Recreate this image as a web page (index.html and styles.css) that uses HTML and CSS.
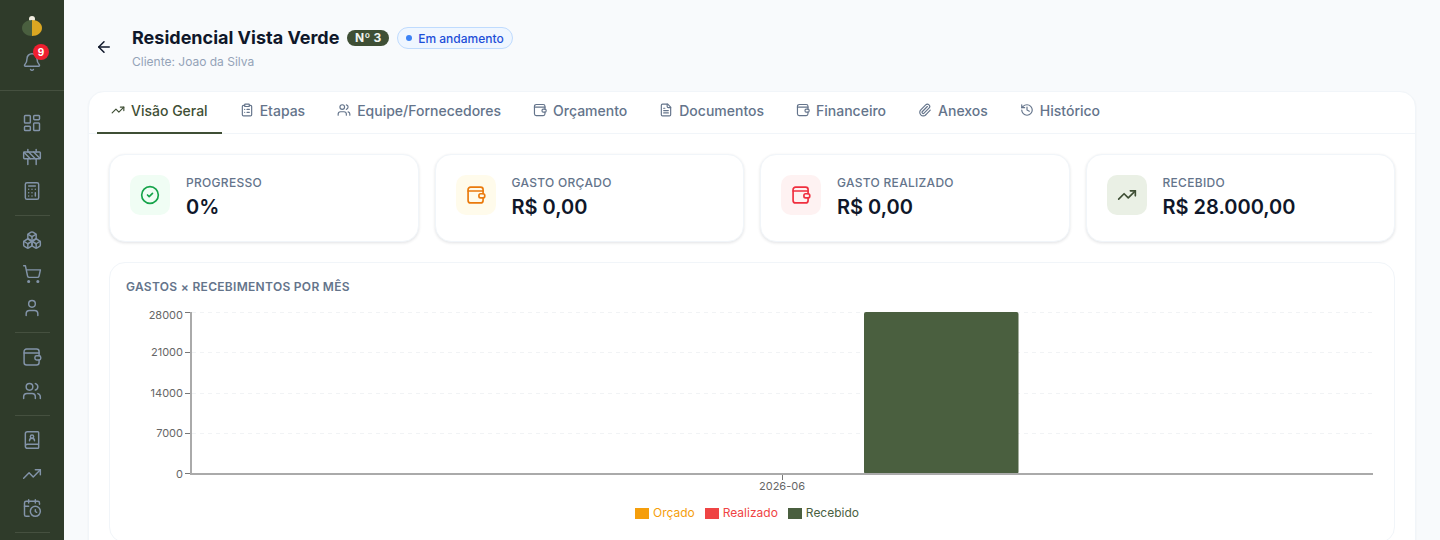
FILE: index.html
```html
<!DOCTYPE html>
<html lang="pt-BR">
<head>
    <meta charset="UTF-8">
    <title>Residencial Vista Verde</title>
    <link rel="stylesheet" href="styles.css">
</head>
<body>
    <svg class="icon-defs" xmlns="http://www.w3.org/2000/svg">
        <symbol id="i-bell" viewBox="0 0 24 24"><path d="M10.268 21a2 2 0 0 0 3.464 0"/><path d="M3.262 15.326A1 1 0 0 0 4 17h16a1 1 0 0 0 .74-1.673C19.41 13.956 18 12.499 18 8A6 6 0 0 0 6 8c0 4.499-1.411 5.956-2.738 7.326"/></symbol>
        <symbol id="i-dashboard" viewBox="0 0 24 24"><rect x="3" y="3" width="7" height="9" rx="1"/><rect x="14" y="3" width="7" height="5" rx="1"/><rect x="14" y="12" width="7" height="9" rx="1"/><rect x="3" y="16" width="7" height="5" rx="1"/></symbol>
        <symbol id="i-construction" viewBox="0 0 24 24"><rect x="2" y="6" width="20" height="8" rx="1"/><path d="M17 14v7"/><path d="M7 14v7"/><path d="M17 3v3"/><path d="M7 3v3"/><path d="M10 14 2.3 6.3"/><path d="m14 6 7.7 7.7"/><path d="m8 6 8 8"/></symbol>
        <symbol id="i-calculator" viewBox="0 0 24 24"><rect x="4" y="2" width="16" height="20" rx="2"/><path d="M8 6h8"/><path d="M16 14v4"/><path d="M16 10h.01"/><path d="M12 10h.01"/><path d="M8 10h.01"/><path d="M12 14h.01"/><path d="M8 14h.01"/><path d="M12 18h.01"/><path d="M8 18h.01"/></symbol>
        <symbol id="i-boxes" viewBox="0 0 24 24"><path d="M2.97 12.92A2 2 0 0 0 2 14.63v3.24a2 2 0 0 0 .97 1.71l3 1.8a2 2 0 0 0 2.06 0L12 19v-5.5l-5-3-4.03 2.42Z"/><path d="m7 16.5-4.74-2.85"/><path d="m7 16.5 5-3"/><path d="M7 16.5v5.17"/><path d="M12 13.5V19l3.97 2.38a2 2 0 0 0 2.06 0l3-1.8a2 2 0 0 0 .97-1.71v-3.24a2 2 0 0 0-.97-1.71L17 10.5l-5 3Z"/><path d="m17 16.5-5-3"/><path d="m17 16.5 4.74-2.85"/><path d="M17 16.5v5.17"/><path d="M7.97 4.42A2 2 0 0 0 7 6.13v4.37l5 3 5-3V6.13a2 2 0 0 0-.97-1.71l-3-1.8a2 2 0 0 0-2.06 0l-3 1.8Z"/><path d="M12 8 7.26 5.15"/><path d="m12 8 4.74-2.85"/><path d="M12 13.5V8"/></symbol>
        <symbol id="i-cart" viewBox="0 0 24 24"><circle cx="8" cy="21" r="1"/><circle cx="19" cy="21" r="1"/><path d="M2.05 2.05h2l2.66 12.42a2 2 0 0 0 2 1.58h9.78a2 2 0 0 0 1.95-1.57l1.65-7.43H5.12"/></symbol>
        <symbol id="i-user" viewBox="0 0 24 24"><path d="M19 21v-2a4 4 0 0 0-4-4H9a4 4 0 0 0-4 4v2"/><circle cx="12" cy="7" r="4"/></symbol>
        <symbol id="i-wallet" viewBox="0 0 24 24"><path d="M20.5 10.5V5.5a3 3 0 0 0-3-3h-12a3 3 0 0 0-3 3v13a3 3 0 0 0 3 3h12a3 3 0 0 0 3-3v-3"/><path d="M2.5 7.2h18"/><rect x="15.5" y="10.5" width="7" height="5" rx="2"/></symbol>
        <symbol id="i-users" viewBox="0 0 24 24"><path d="M16 21v-2a4 4 0 0 0-4-4H6a4 4 0 0 0-4 4v2"/><path d="M16 3.128a4 4 0 0 1 0 7.744"/><path d="M22 21v-2a4 4 0 0 0-3-3.87"/><circle cx="9" cy="7" r="4"/></symbol>
        <symbol id="i-book-user" viewBox="0 0 24 24"><path d="M15 13a3 3 0 1 0-6 0"/><path d="M4 19.5v-15A2.5 2.5 0 0 1 6.5 2H19a1 1 0 0 1 1 1v18a1 1 0 0 1-1 1H6.5a1 1 0 0 1 0-5H20"/><circle cx="12" cy="8" r="2"/></symbol>
        <symbol id="i-trending" viewBox="0 0 24 24"><path d="M16 7h6v6"/><path d="m22 7-8.5 8.5-5-5L2 17"/></symbol>
        <symbol id="i-calendar-clock" viewBox="0 0 24 24"><path d="M16 14v2.2l1.6 1"/><path d="M16 2v4"/><path d="M21 7.5V6a2 2 0 0 0-2-2H5a2 2 0 0 0-2 2v14a2 2 0 0 0 2 2h3.5"/><path d="M3 10h5"/><path d="M8 2v4"/><circle cx="16" cy="16" r="6"/></symbol>
        <symbol id="i-clipboard" viewBox="0 0 24 24"><rect x="8" y="2" width="8" height="4" rx="1"/><path d="M16 4h2a2 2 0 0 1 2 2v14a2 2 0 0 1-2 2H6a2 2 0 0 1-2-2V6a2 2 0 0 1 2-2h2"/><path d="M12 11h4"/><path d="M12 16h4"/><path d="M8 11h.01"/><path d="M8 16h.01"/></symbol>
        <symbol id="i-file" viewBox="0 0 24 24"><path d="M15 2H6a2 2 0 0 0-2 2v16a2 2 0 0 0 2 2h12a2 2 0 0 0 2-2V7Z"/><path d="M14 2v4a2 2 0 0 0 2 2h4"/><path d="M10 9H8"/><path d="M16 13H8"/><path d="M16 17H8"/></symbol>
        <symbol id="i-clip" viewBox="0 0 24 24"><path d="M13.234 20.252 21 12.3"/><path d="m16 6-8.414 8.586a2 2 0 0 0 0 2.828 2 2 0 0 0 2.828 0l8.414-8.586a4 4 0 0 0 0-5.656 4 4 0 0 0-5.656 0l-8.415 8.585a6 6 0 1 0 8.486 8.486"/></symbol>
        <symbol id="i-history" viewBox="0 0 24 24"><path d="M3 12a9 9 0 1 0 9-9 9.75 9.75 0 0 0-6.74 2.74L3 8"/><path d="M3 3v5h5"/><path d="M12 7v5l4 2"/></symbol>
        <symbol id="i-check" viewBox="0 0 24 24"><circle cx="12" cy="12" r="10"/><path d="m9 12 2 2 4-4"/></symbol>
        <symbol id="i-back" viewBox="0 0 24 24"><path d="m12 19-7-7 7-7"/><path d="M19 12H5"/></symbol>
    </svg>

    <div class="app">
        <aside class="sidebar">
            <div class="side-top">
                <svg class="logo" viewBox="0 0 20 20">
                    <circle cx="10" cy="3" r="3" fill="#f1ede0"/>
                    <path d="M10 4C4.500 4 0 7.500 0 12s4.500 8 10 8Z" fill="#4a5f3f"/>
                    <path d="M10 4c5.500 0 10 3.500 10 8s-4.500 8-10 8Z" fill="#dba722"/>
                </svg>
                <div class="bell">
                    <svg class="icon-20"><use href="#i-bell"/></svg>
                    <span class="bell-count">9</span>
                </div>
            </div>
            <nav class="side-nav">
                <a class="side-link"><svg class="icon-20"><use href="#i-dashboard"/></svg></a>
                <a class="side-link"><svg class="icon-20"><use href="#i-construction"/></svg></a>
                <a class="side-link"><svg class="icon-20"><use href="#i-calculator"/></svg></a>
                <hr class="side-line">
                <a class="side-link"><svg class="icon-20"><use href="#i-boxes"/></svg></a>
                <a class="side-link"><svg class="icon-20"><use href="#i-cart"/></svg></a>
                <a class="side-link"><svg class="icon-20"><use href="#i-user"/></svg></a>
                <hr class="side-line">
                <a class="side-link"><svg class="icon-20"><use href="#i-wallet"/></svg></a>
                <a class="side-link"><svg class="icon-20"><use href="#i-users"/></svg></a>
                <hr class="side-line">
                <a class="side-link"><svg class="icon-20"><use href="#i-book-user"/></svg></a>
                <a class="side-link"><svg class="icon-20"><use href="#i-trending"/></svg></a>
                <a class="side-link"><svg class="icon-20"><use href="#i-calendar-clock"/></svg></a>
                <hr class="side-line">
            </nav>
        </aside>

        <main class="main">
            <header class="page-head">
                <svg class="back"><use href="#i-back"/></svg>
                <div class="head-text">
                    <div class="title-row">
                        <h1>Residencial Vista Verde</h1>
                        <span class="num-badge">Nº 3</span>
                        <span class="status"><i class="status-dot"></i>Em andamento</span>
                    </div>
                    <p class="client">Cliente: Joao da Silva</p>
                </div>
            </header>

            <section class="panel">
                <div class="tabs">
                    <a class="tab active"><svg class="icon-14"><use href="#i-trending"/></svg>Visão Geral</a>
                    <a class="tab"><svg class="icon-14"><use href="#i-clipboard"/></svg>Etapas</a>
                    <a class="tab"><svg class="icon-14"><use href="#i-users"/></svg>Equipe/Fornecedores</a>
                    <a class="tab"><svg class="icon-14"><use href="#i-wallet"/></svg>Orçamento</a>
                    <a class="tab"><svg class="icon-14"><use href="#i-file"/></svg>Documentos</a>
                    <a class="tab"><svg class="icon-14"><use href="#i-wallet"/></svg>Financeiro</a>
                    <a class="tab"><svg class="icon-14"><use href="#i-clip"/></svg>Anexos</a>
                    <a class="tab"><svg class="icon-14"><use href="#i-history"/></svg>Histórico</a>
                </div>

                <div class="panel-body">
                    <div class="stats">
                        <div class="stat">
                            <div class="stat-icon green"><svg class="icon-20"><use href="#i-check"/></svg></div>
                            <div><div class="stat-label">PROGRESSO</div><div class="stat-value">0%</div></div>
                        </div>
                        <div class="stat">
                            <div class="stat-icon amber"><svg class="icon-20"><use href="#i-wallet"/></svg></div>
                            <div><div class="stat-label">GASTO ORÇADO</div><div class="stat-value">R$ 0,00</div></div>
                        </div>
                        <div class="stat">
                            <div class="stat-icon red"><svg class="icon-20"><use href="#i-wallet"/></svg></div>
                            <div><div class="stat-label">GASTO REALIZADO</div><div class="stat-value">R$ 0,00</div></div>
                        </div>
                        <div class="stat">
                            <div class="stat-icon olive"><svg class="icon-20"><use href="#i-trending"/></svg></div>
                            <div><div class="stat-label">RECEBIDO</div><div class="stat-value">R$ 28.000,00</div></div>
                        </div>
                    </div>

                    <div class="chart-card">
                        <h2 class="chart-title">GASTOS × RECEBIMENTOS POR MÊS</h2>
                        <svg class="chart" viewBox="0 0 1284 200" width="1284" height="200">
                            <g class="grid">
                                <line x1="82" x2="1263" y1="22.5" y2="22.5"/>
                                <line x1="82" x2="1263" y1="62.5" y2="62.5"/>
                                <line x1="82" x2="1263" y1="103.5" y2="103.5"/>
                                <line x1="82" x2="1263" y1="143.5" y2="143.5"/>
                            </g>
                            <rect class="bar" x="754" y="22" width="154.500" height="162" rx="2"/>
                            <g class="ticks">
                                <line x1="75" x2="80" y1="22.5" y2="22.5"/>
                                <line x1="75" x2="80" y1="62.5" y2="62.5"/>
                                <line x1="75" x2="80" y1="103.5" y2="103.5"/>
                                <line x1="75" x2="80" y1="143.5" y2="143.5"/>
                                <line x1="75" x2="80" y1="183.5" y2="183.5"/>
                                <line x1="672.5" x2="672.5" y1="184" y2="190"/>
                            </g>
                            <g class="axis">
                                <line x1="81" x2="81" y1="22" y2="185"/>
                                <line x1="80" x2="1263" y1="184" y2="184"/>
                            </g>
                            <g class="labels">
                                <text x="73" y="29">28000</text>
                                <text x="73" y="66">21000</text>
                                <text x="73" y="107">14000</text>
                                <text x="73" y="147">7000</text>
                                <text x="73" y="188">0</text>
                                <text class="x-label" x="672" y="200">2026-06</text>
                            </g>
                        </svg>
                        <div class="legend">
                            <span class="legend-item orcado"><i></i>Orçado</span>
                            <span class="legend-item realizado"><i></i>Realizado</span>
                            <span class="legend-item recebido"><i></i>Recebido</span>
                        </div>
                    </div>
                </div>
            </section>
        </main>
    </div>
</body>
</html>
```

FILE: styles.css
```css
* {
    box-sizing: border-box;
}

html, body {
    height: 540px;
    overflow: hidden;
}

body {
    margin: 0;
    font-family: 'Inter', sans-serif;
    background-color: #f8fafc;
    color: #0f172a;
}

.icon-defs {
    display: none;
}

.icon-20, .icon-14, .back {
    fill: none;
    stroke: currentColor;
    stroke-width: 2;
    stroke-linecap: round;
    stroke-linejoin: round;
    flex-shrink: 0;
}

.icon-20 {
    width: 20px;
    height: 20px;
    stroke-width: 1.75;
}

.icon-14 {
    width: 14px;
    height: 14px;
}

.app {
    display: flex;
    height: 540px;
}

/* barra lateral */
.sidebar {
    width: 64px;
    flex-shrink: 0;
    background-color: #2f3b2a;
    color: #8394a9;
    overflow: hidden;
}

.side-top {
    display: flex;
    flex-direction: column;
    align-items: center;
    height: 91px;
    padding-top: 16px;
    border-bottom: 1px solid #45503f;
}

.logo {
    width: 20px;
    height: 20px;
}

.bell {
    position: relative;
    margin-top: 16px;
    height: 20px;
}

.bell-count {
    position: absolute;
    top: -8px;
    left: 11px;
    width: 16px;
    height: 16px;
    border-radius: 50%;
    background-color: #ef1f30;
    color: #fff;
    font-size: 10px;
    font-weight: 700;
    line-height: 16px;
    text-align: center;
}

.side-nav {
    display: flex;
    flex-direction: column;
    align-items: center;
    padding-top: 15px;
}

.side-link {
    display: flex;
    align-items: center;
    justify-content: center;
    height: 34px;
    width: 100%;
}

.side-line {
    width: 35px;
    height: 1px;
    margin: 7px 0;
    border: none;
    background-color: #45503f;
}

/* conteudo */
.main {
    flex: 1;
    min-width: 0;
    height: 540px;
    padding: 25px 24px 0;
    overflow: hidden;
}

.page-head {
    display: flex;
    align-items: center;
    gap: 19px;
    height: 44px;
    padding-left: 7px;
    margin-bottom: 22px;
}

.back {
    width: 18px;
    height: 18px;
    color: #0f172a;
}

.head-text {
    padding-top: 2px;
}

.title-row {
    display: flex;
    align-items: center;
    gap: 8px;
    height: 24px;
}

h1 {
    margin: 0;
    font-size: 18px;
    font-weight: 700;
    line-height: 24px;
}

.num-badge {
    height: 16px;
    padding: 0 7.5px;
    border-radius: 8px;
    background-color: #3f4f35;
    color: #f1f5f0;
    font-size: 12px;
    font-weight: 700;
    line-height: 16px;
    letter-spacing: 0.3px;
}

.status {
    display: inline-flex;
    align-items: center;
    gap: 6px;
    height: 22px;
    padding: 0 8px;
    border: 1px solid #bfdbfe;
    border-radius: 11px;
    background-color: #eff6ff;
    color: #1d4ed8;
    font-size: 12px;
    font-weight: 500;
}

.status-dot {
    width: 6px;
    height: 6px;
    border-radius: 50%;
    background-color: #3b82f6;
}

.client {
    margin: 4px 0 0;
    font-size: 12px;
    line-height: 16px;
    color: #94a3b8;
}

.panel {
    height: 600px;
    background-color: #fff;
    border: 1px solid #f1f5f9;
    border-radius: 16px;
    box-shadow: 0 1px 2px rgba(15, 23, 42, 0.05);
}

.tabs {
    display: flex;
    gap: 4px;
    height: 42px;
    padding: 0 8px;
    border-bottom: 1px solid #f1f5f9;
}

.tab {
    display: flex;
    align-items: center;
    gap: 6px;
    height: 42px;
    padding: 0 14px 4px;
    border-bottom: 2px solid transparent;
    font-size: 14px;
    font-weight: 500;
    color: #64748b;
}

.tab.active {
    color: #3f4f35;
    border-bottom-color: #3f4f35;
}

.panel-body {
    padding: 20px;
}

.stats {
    display: grid;
    grid-template-columns: repeat(4, 1fr);
    gap: 16px;
    margin-bottom: 20px;
}

.stat {
    display: flex;
    align-items: flex-start;
    gap: 16px;
    height: 88px;
    padding: 20px;
    border: 1px solid #f1f5f9;
    border-radius: 16px;
    background-color: #fff;
    box-shadow: 0 1px 3px rgba(15, 23, 42, 0.12);
}

.stat-icon {
    display: flex;
    align-items: center;
    justify-content: center;
    width: 40px;
    height: 40px;
    border-radius: 10px;
}

.stat-icon .icon-20 {
    stroke-width: 2;
}

.green { background-color: #f0fdf4; color: #16a34a; }
.amber { background-color: #fffbeb; color: #ea7a0c; }
.red { background-color: #fef2f2; color: #ef2f3f; }
.olive { background-color: #eaf0e5; color: #3f4f35; }

.stat-label {
    font-size: 12px;
    font-weight: 500;
    line-height: 16px;
    letter-spacing: 0.3px;
    color: #64748b;
}

.stat-value {
    margin-top: 2px;
    font-size: 20px;
    font-weight: 600;
    line-height: 28px;
}

.chart-card {
    height: 281px;
    padding: 16px;
    border: 1px solid #f1f5f9;
    border-radius: 16px;
}

.chart-title {
    margin: 0;
    font-size: 12px;
    font-weight: 600;
    line-height: 16px;
    letter-spacing: 0.3px;
    color: #64748b;
}

.chart {
    display: block;
    margin: -5px 0 0 -16px;
    overflow: visible;
}

.grid line {
    stroke: #f1f3f5;
    stroke-dasharray: 4 4;
}

.bar {
    fill: #4a5f3f;
}

.axis line {
    stroke: #aaa;
    stroke-width: 2;
}

.ticks line {
    stroke: #777;
}

.labels text {
    font-size: 11px;
    fill: #666;
    text-anchor: end;
}

.labels .x-label {
    text-anchor: middle;
}

.legend {
    display: flex;
    justify-content: center;
    gap: 10px;
    margin-top: 15px;
    padding-right: 10px;
    font-size: 12px;
    line-height: 16px;
}

.legend-item {
    display: flex;
    align-items: center;
    gap: 4px;
}

.legend-item i {
    width: 14px;
    height: 11px;
}

.orcado { color: #f59e0b; }
.orcado i { background-color: #f59e0b; }
.realizado { color: #ef4444; }
.realizado i { background-color: #ef4444; }
.recebido { color: #4a5f3f; }
.recebido i { background-color: #4a5f3f; }
```
